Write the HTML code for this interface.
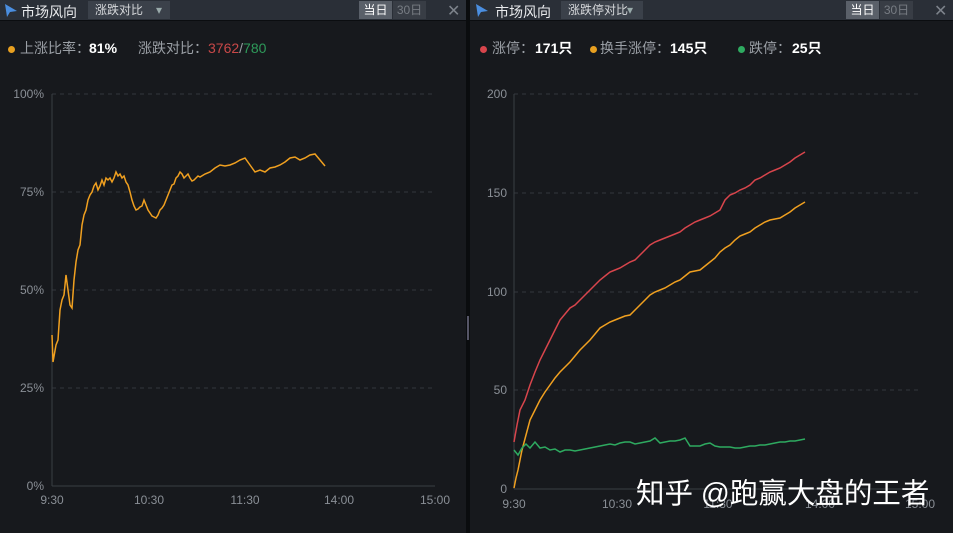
<!DOCTYPE html>
<html><head><meta charset="utf-8"><style>
*{margin:0;padding:0;box-sizing:border-box}
body{width:953px;height:533px;background:#17191d;overflow:hidden;position:relative;font-family:"Liberation Sans","Noto Sans CJK SC",sans-serif}
.hdr{position:absolute;top:0;height:21px;background:#2a2f37;border-bottom:1px solid #0b0d10}
.ttl{position:absolute;top:2px;font-size:14px;color:#e8eaec}
.dd{position:absolute;top:1px;height:18px;background:#3b414a;color:#d6d8db;font-size:12px;line-height:18px;padding-left:7px}
.tab{position:absolute;top:1px;height:18px;font-size:12px;line-height:18px;text-align:center;width:33px}
.x{position:absolute;top:1px;font-size:16px;color:#7d838b}
.l{position:absolute;top:39px;height:18px;line-height:18px;font-size:14px;color:#9ba0a6;white-space:nowrap}
.b{color:#fff;font-weight:bold}
.dot{position:absolute;top:46px;width:7px;height:7px;border-radius:4px}
</style></head><body>
<div class="hdr" style="left:0;width:466px"></div>
<div class="hdr" style="left:470px;width:483px"></div>
<div style="position:absolute;left:466px;top:0;width:4px;height:533px;background:#0a0c0e"></div>
<div style="position:absolute;left:467px;top:316px;width:2px;height:24px;background:#556"></div>
<svg style="position:absolute;left:4px;top:3px" width="14" height="15"><path d="M1 1 L13 8 L6 9 L3 14 Z" fill="#4a8ee0"/></svg>
<svg style="position:absolute;left:475px;top:3px" width="14" height="15"><path d="M1 1 L13 8 L6 9 L3 14 Z" fill="#4a8ee0"/></svg>
<div class="ttl" style="left:21px">市场风向</div>
<div class="ttl" style="left:495px">市场风向</div>
<div class="dd" style="left:88px;width:82px">涨跌对比<span style="position:absolute;left:68px;top:0;color:#9aa">▾</span></div>
<div class="dd" style="left:561px;width:82px">涨跌停对比<span style="position:absolute;left:66px;top:0;color:#9aa">▾</span></div>
<div class="tab" style="left:359px;background:#5a6069;color:#fff">当日</div>
<div class="tab" style="left:393px;background:#383d45;color:#777c83">30日</div>
<div class="tab" style="left:846px;background:#5a6069;color:#fff">当日</div>
<div class="tab" style="left:880px;background:#383d45;color:#777c83">30日</div>
<div class="x" style="left:447px">✕</div>
<div class="x" style="left:934px">✕</div>

<div class="dot" style="left:8px;background:#e8a020"></div>
<div class="l" style="left:20px">上涨比率：</div>
<div class="l b" style="left:89px">81%</div>
<div class="l" style="left:138px">涨跌对比：<span style="color:#c84848">3762</span>/<span style="color:#2e9a5a">780</span></div>

<div class="dot" style="left:480px;background:#d8454c"></div>
<div class="l" style="left:492px">涨停：</div>
<div class="l b" style="left:535px">171只</div>
<div class="dot" style="left:590px;background:#e8a020"></div>
<div class="l" style="left:600px">换手涨停：</div>
<div class="l b" style="left:670px">145只</div>
<div class="dot" style="left:738px;background:#2eaa60"></div>
<div class="l" style="left:749px">跌停：</div>
<div class="l b" style="left:792px">25只</div>

<svg style="position:absolute;left:0;top:0" width="953" height="533" font-family="Liberation Sans, sans-serif" font-size="12" fill="#8a8f96">
<g stroke="#33373d" stroke-dasharray="4,4">
<line x1="52" y1="94" x2="435" y2="94"/><line x1="52" y1="192" x2="435" y2="192"/><line x1="52" y1="290" x2="435" y2="290"/><line x1="52" y1="388" x2="435" y2="388"/>
<line x1="514" y1="94" x2="920" y2="94"/><line x1="514" y1="193" x2="920" y2="193"/><line x1="514" y1="292" x2="920" y2="292"/><line x1="514" y1="390" x2="920" y2="390"/>
</g>
<g stroke="#3a3e44"><line x1="52" y1="94" x2="52" y2="486"/><line x1="52" y1="486" x2="435" y2="486"/><line x1="514" y1="94" x2="514" y2="489"/><line x1="514" y1="489" x2="920" y2="489"/></g>
<g text-anchor="end"><text x="44" y="98">100%</text><text x="44" y="196">75%</text><text x="44" y="294">50%</text><text x="44" y="392">25%</text><text x="44" y="490">0%</text>
<text x="507" y="98">200</text><text x="507" y="197">150</text><text x="507" y="296">100</text><text x="507" y="394">50</text><text x="507" y="493">0</text></g>
<g text-anchor="middle"><text x="52" y="504">9:30</text><text x="149" y="504">10:30</text><text x="245" y="504">11:30</text><text x="339" y="504">14:00</text><text x="435" y="504">15:00</text>
<text x="514" y="508">9:30</text><text x="617" y="508">10:30</text><text x="718" y="508">11:30</text><text x="820" y="508">14:00</text><text x="920" y="508">15:00</text></g>
<g fill="none" stroke-width="1.5">
<polyline stroke="#f0a020" points="52,335 53,362 56,345 58,340 60,310 62,300 64,295 66,275 68,290 70,305 72,308 74,280 76,262 78,250 80,245 82,225 84,215 86,210 88,200 90,195 92,192 94,186 96,183 98,190 100,186 102,180 104,185 106,178 108,180 110,178 112,182 114,178 116,172 118,176 120,174 122,178 124,176 126,182 128,185 130,192 132,200 134,206 136,210 138,209 140,207 142,206 144,200 146,205 148,210 150,213 152,216 154,217 156,218 158,215 160,210 162,208 164,205 166,200 168,195 170,190 172,185 174,184 176,178 178,176 180,172 182,174 184,178 186,176 188,174 190,178 192,181 194,180 196,178 198,176 200,177 205,174 210,172 215,168 220,165 225,166 230,165 235,163 240,160 245,158 250,165 255,172 260,170 265,172 270,168 275,167 280,165 285,162 290,158 295,157 300,160 305,158 310,155 315,154 320,160 325,166"/>
<polyline stroke="#d8454c" points="514,442 517,425 520,410 525,400 530,385 535,372 540,360 545,350 550,340 555,330 560,320 565,314 570,308 575,305 580,300 585,295 590,290 595,285 600,280 605,276 610,272 615,270 620,268 625,265 630,262 635,260 640,255 645,250 650,245 655,242 660,240 665,238 670,236 675,234 680,232 685,228 690,225 695,222 700,220 705,218 710,216 715,213 720,210 725,200 730,195 735,193 740,190 745,188 750,185 755,180 760,178 765,175 770,172 775,170 780,168 785,165 790,162 795,158 800,155 805,152"/>
<polyline stroke="#f0a020" points="514,488 516,478 518,470 520,460 522,450 526,435 530,420 535,410 540,400 545,392 550,385 555,378 560,372 565,367 570,362 575,356 580,350 585,345 590,340 595,334 600,328 605,325 610,322 615,320 620,318 625,316 630,315 635,310 640,305 645,300 650,295 655,292 660,290 665,288 670,285 675,282 680,280 685,276 690,272 695,271 700,270 705,266 710,262 715,258 720,252 725,248 730,245 735,240 740,236 745,234 750,232 755,228 760,225 765,222 770,220 775,219 780,218 785,215 790,212 795,208 800,205 805,202"/>
<polyline stroke="#2eaa60" points="514,450 518,455 522,448 526,444 530,448 535,442 540,448 545,447 550,450 555,449 560,452 565,450 570,450 575,451 580,450 585,449 590,448 595,447 600,446 605,445 610,444 615,445 620,443 625,442 630,442 635,444 640,443 645,442 650,441 655,438 660,443 665,442 670,441 675,441 680,440 685,438 690,446 695,446 700,446 705,444 710,443 715,446 720,447 725,447 730,447 735,448 740,448 745,447 750,446 755,446 760,445 765,445 770,444 775,443 780,442 785,442 790,441 795,441 800,440 805,439"/>
</g>
<text x="636" y="503" font-size="28.5" fill="#fff" font-family="Liberation Sans, Noto Sans CJK SC, sans-serif">知乎 @跑赢大盘的王者</text>
</svg>
</body></html>
